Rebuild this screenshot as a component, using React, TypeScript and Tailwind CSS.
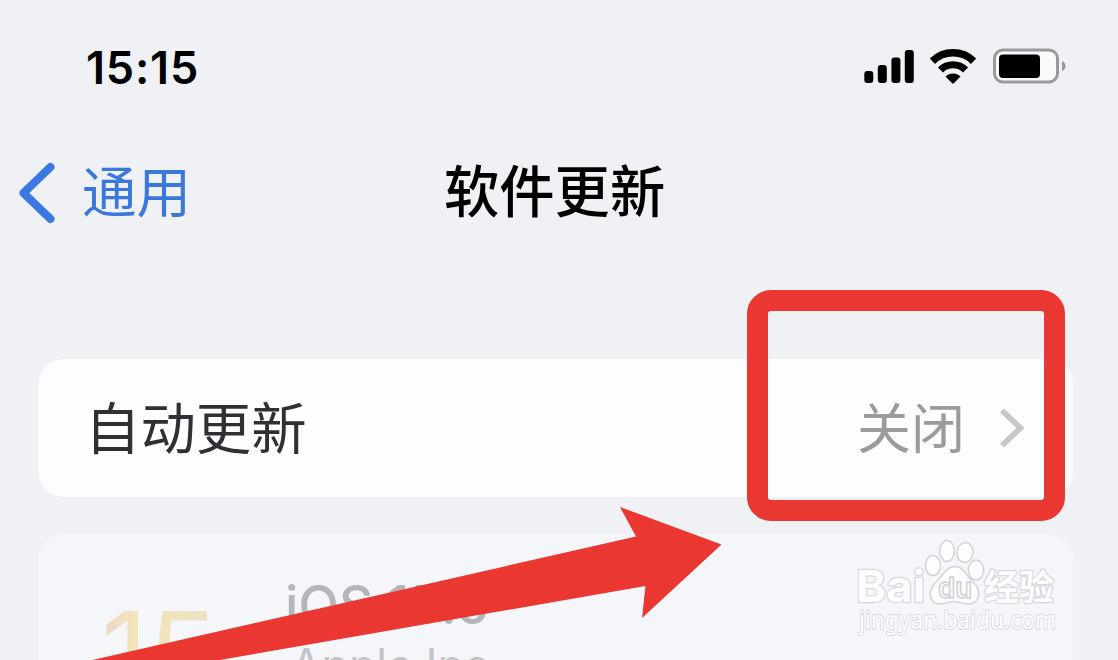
import type { ReactNode } from 'react';

const CJK = "font-['Noto_Sans_CJK_SC',sans-serif]";
const LATIN = "font-['Inter',sans-serif]";

function SignalIcon() {
  return (
    <svg width="50" height="34" viewBox="0 0 50 34" fill="#000">
      <rect x="0.3" y="22" width="9" height="12" rx="3" />
      <rect x="13.8" y="16" width="9" height="18" rx="3" />
      <rect x="27.4" y="8.5" width="9" height="25.5" rx="3" />
      <rect x="40.8" y="1" width="9" height="33" rx="3" />
    </svg>
  );
}

function WifiIcon() {
  return (
    <svg width="48" height="36" viewBox="0 0 48 36">
      <path d="M3.4 13.2 A29.5 29.5 0 0 1 44.6 13.2" fill="none" stroke="#000" strokeWidth="7.6" />
      <path d="M11.5 22 A17.5 17.5 0 0 1 36.5 22" fill="none" stroke="#000" strokeWidth="7.2" />
      <path d="M16.5 28.6 A10.5 10.5 0 0 1 31.5 28.6 L25 35 Q24 36 23 35 Z" fill="#000" />
    </svg>
  );
}

function BatteryIcon() {
  return (
    <svg width="74" height="36" viewBox="0 0 74 36">
      <rect x="1.5" y="2" width="63" height="32" rx="8.5" fill="#f8f9fb" stroke="#98999c" strokeWidth="3" />
      <rect x="6" y="6.5" width="41" height="23.5" rx="4" fill="#000" />
      <path d="M69 13 Q72.5 14.5 72.5 18 Q72.5 21.5 69 23 Z" fill="#98999c" />
    </svg>
  );
}

function StatusBar() {
  return (
    <div className="flex h-[132px] items-center justify-between pr-[51px] pl-[86px]">
      <span className={`${LATIN} mt-[2px] text-[45px] leading-none font-semibold tracking-[0.8px] text-black`}>15:15</span>
      <div className="flex items-center">
        <SignalIcon />
        <span className="w-[15px]" />
        <WifiIcon />
        <span className="w-[16px]" />
        <BatteryIcon />
      </div>
    </div>
  );
}

function NavBar() {
  return (
    <div className="grid h-[122px] grid-cols-[444px_1fr] items-center">
      <a className="flex items-center pl-[18px] text-[#3b78dc]">
        <svg width="38" height="62" viewBox="0 0 38 62" fill="none" stroke="#3b78e0" strokeWidth="8" strokeLinecap="round" strokeLinejoin="round">
          <path d="M32.5 5 L5.5 31 L32.5 57" />
        </svg>
        <span className={`${CJK} mb-[7px] ml-[26px] text-[54.5px] leading-none`}>通用</span>
      </a>
      <h1 className={`${CJK} mb-[8px] text-[55.3px] leading-none font-medium text-black`}>软件更新</h1>
    </div>
  );
}

function Card({ className, children }: { className: string; children: ReactNode }) {
  return <div className={`ml-[38px] w-[1035px] shrink-0 ${className}`}>{children}</div>;
}

function AutoUpdateRow() {
  return (
    <Card className="flex h-[138px] items-center justify-between rounded-[26px] bg-[#fcfdfe] pr-[48px] pl-[47px]">
      <span className={`${CJK} mb-[5px] text-[55.4px] leading-none text-[#2f3033]`}>自动更新</span>
      <div className="flex items-center">
        <span className={`${CJK} mb-[5px] text-[54px] leading-none text-[#9b9b9c]`}>关闭</span>
        <svg className="ml-[34px]" width="26" height="42" viewBox="0 0 26 42" fill="none" stroke="#c6c7c9" strokeWidth="5.5">
          <path d="M3 3.5 L21.5 21 L3 38.5" />
        </svg>
      </div>
    </Card>
  );
}

function ReleaseCard() {
  return (
    <Card className="mt-[37px] flex h-[220px] rounded-[26px] bg-[#f5f6fa]">
      <div className="w-[247px] pt-[61px] pl-[63px]">
        <span className={`${LATIN} bg-linear-to-r from-[#ecd5c8] from-0% via-[#f2e6b8] via-30% to-[#eee0c4] bg-clip-text text-[116px] leading-none font-normal tracking-[-1px] text-transparent`}>15</span>
      </div>
      <div className={`${LATIN} flex flex-col pt-[45px]`}>
        <span className="text-[53px] leading-none font-medium text-[#b4b6b9]">iOS 15.6</span>
        <span className="mt-[11px] ml-[6px] text-[44.5px] leading-none text-[#c3c4c8]">Apple Inc.</span>
      </div>
    </Card>
  );
}

function PointerArrow() {
  return (
    <svg className="absolute inset-0" width="1118" height="660" viewBox="0 0 1118 660">
      <path d="M88 661 L636 536.5 L620 507 L721.5 544.5 L642 618 L645.5 586 L214 661 Z" fill="#eb3731" />
    </svg>
  );
}

function Watermark() {
  return (
    <svg className="absolute top-[532px] left-[850px]" width="220" height="110" viewBox="0 0 220 110">
      <g fill="#fcfdff" stroke="#d3d4d7" strokeWidth="1.5">
        <ellipse cx="83" cy="33.5" rx="7.6" ry="10" />
        <ellipse cx="97" cy="19" rx="7.4" ry="10.5" />
        <ellipse cx="115" cy="20.5" rx="8" ry="10" transform="rotate(10 115 20.5)" />
        <ellipse cx="126" cy="38" rx="7.6" ry="10" />
        <path d="M105 34.5 C114 34.5 116 44 123 50 C133 59 129 72 118 72 C112 72 109 69.5 104 69.5 C99 69.5 95 72 90 72 C79 72 77 59 86 50 C93 44 96 34.5 105 34.5 Z" />
      </g>
      <g fill="#fcfdff" stroke="#d8d9dc" strokeWidth="2.4" paintOrder="stroke" strokeLinejoin="round">
        <text x="6" y="70" textLength="69" lengthAdjust="spacingAndGlyphs" fontSize="44" className={`${LATIN} font-bold`}>Bai</text>
        <text x="134" y="68" textLength="70" lengthAdjust="spacingAndGlyphs" fontSize="35" className={`${CJK} font-bold`}>经验</text>
        <text x="9" y="97" textLength="197" lengthAdjust="spacingAndGlyphs" fontSize="25" strokeWidth="1.8" className="font-['Noto_Sans',sans-serif]">jingyan.baidu.com</text>
      </g>
      <text x="88" y="66" textLength="34" lengthAdjust="spacingAndGlyphs" fontSize="28" fill="#fcfdff" stroke="#d0d1d5" strokeWidth="1.5" className={`${LATIN} font-semibold`}>du</text>
    </svg>
  );
}

export default function App() {
  return (
    <div className="relative h-[660px] w-[1118px] overflow-hidden bg-[#f0f1f5]">
      <StatusBar />
      <NavBar />
      <main className="mt-[105px] flex flex-col">
        <AutoUpdateRow />
        <ReleaseCard />
      </main>
      <PointerArrow />
      {/* callout around the current value */}
      <div className="absolute top-[290px] left-[747px] h-[231px] w-[318px] rounded-[24px] border-[21.5px] border-[#eb3731]" />
      <Watermark />
    </div>
  );
}
